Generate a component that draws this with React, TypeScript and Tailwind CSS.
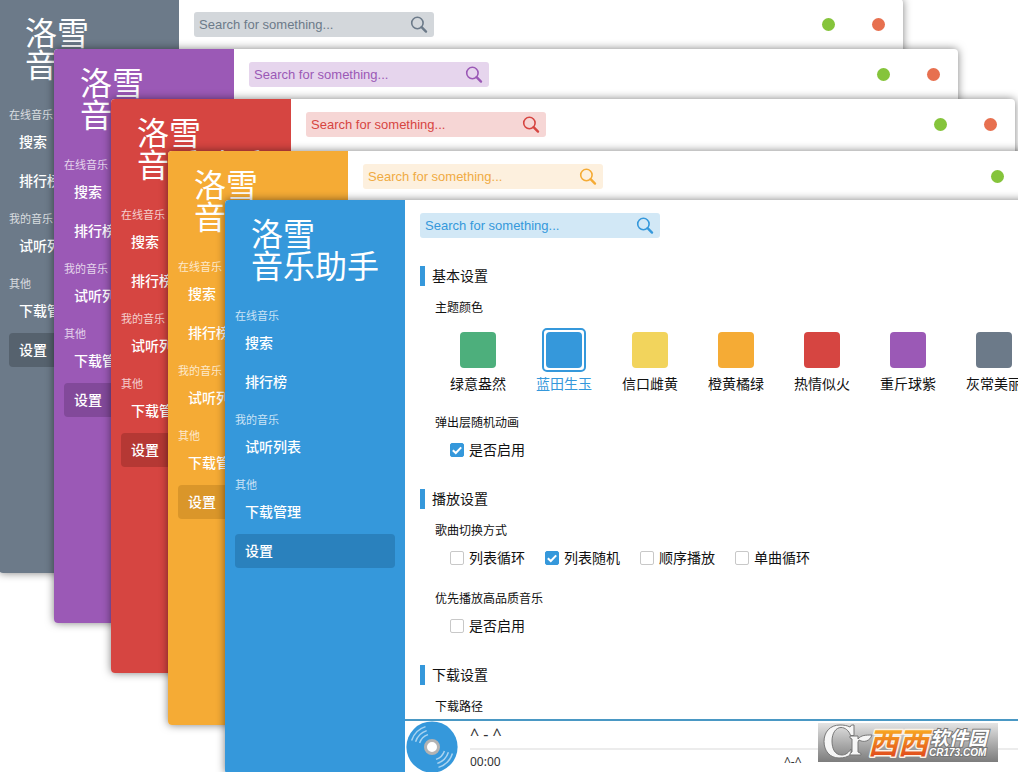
import React from "react";

type Theme = {
  id: string;
  place: string;
  side: string;
  active: string;
  field: string;
  text: string;
  placeholder: string;
};

const themes: Theme[] = [
  { id: "grey", place: "-left-px -top-px", side: "bg-[#6c7a89]", active: "bg-[#56626e]", field: "bg-[#d3d7db]", text: "text-[#6c7a89]", placeholder: "placeholder:text-[#6c7a89]" },
  { id: "purple", place: "left-[54px] top-[49px]", side: "bg-[#9b59b6]", active: "bg-[#82499a]", field: "bg-[#e6d5ed]", text: "text-[#9b59b6]", placeholder: "placeholder:text-[#9b59b6]" },
  { id: "red", place: "left-[111px] top-[99px]", side: "bg-[#d64541]", active: "bg-[#b53834]", field: "bg-[#f6d6d5]", text: "text-[#d64541]", placeholder: "placeholder:text-[#d64541]" },
  { id: "orange", place: "left-[168px] top-[151px]", side: "bg-[#f5ab35]", active: "bg-[#da962a]", field: "bg-[#fdf0de]", text: "text-[#f5ab35]", placeholder: "placeholder:text-[#f0ab43]" },
  { id: "blue", place: "left-[225px] top-[200px]", side: "bg-[#3598db]", active: "bg-[#2a81bd]", field: "bg-[#d2e8f6]", text: "text-[#3598db]", placeholder: "placeholder:text-[#3598db]" },
];

const groups = [
  { title: "在线音乐", items: ["搜索", "排行榜"] },
  { title: "我的音乐", items: ["试听列表"] },
  { title: "其他", items: ["下载管理", "设置"] },
];

const swatches = [
  { name: "绿意盎然", color: "bg-[#4daf7c]" },
  { name: "蓝田生玉", color: "bg-[#3598db]", selected: true },
  { name: "信口雌黄", color: "bg-[#f2d45c]" },
  { name: "橙黄橘绿", color: "bg-[#f5ab35]" },
  { name: "热情似火", color: "bg-[#d64541]" },
  { name: "重斤球紫", color: "bg-[#9b59b6]" },
  { name: "灰常美丽", color: "bg-[#6c7a89]" },
];

function Sidebar({ theme }: { theme: Theme }) {
  return (
    <aside className={`w-[180px] shrink-0 px-2.5 pt-[19px] text-white ${theme.side}`}>
      <h1 className="pl-4 text-[32px] leading-8">
        洛雪
        <br />
        音乐助手
      </h1>
      <nav className="mt-3">
        {groups.map((g) => (
          <div key={g.title} className="pt-[11px]">
            <h2 className="text-[11px] leading-5 text-white/75">{g.title}</h2>
            <ul className="flex flex-col gap-[5px]">
              {g.items.map((item) => (
                <li key={item}>
                  <a
                    href="#"
                    className={`block rounded px-2.5 text-sm leading-[34px] font-medium ${item === "设置" ? theme.active : ""}`}
                  >
                    {item}
                  </a>
                </li>
              ))}
            </ul>
          </div>
        ))}
      </nav>
    </aside>
  );
}

function TopBar({ theme }: { theme: Theme }) {
  return (
    <header className="flex h-[50px] shrink-0 items-center justify-between pr-[18px] pl-[15px]">
      <form className={`flex h-[25px] w-60 items-center rounded-[3px] px-[5px] pt-0.5 ${theme.field} ${theme.text}`}>
        <input
          type="text"
          aria-label="Search"
          placeholder="Search for something..."
          className={`min-w-0 flex-1 bg-transparent text-[13px] outline-none ${theme.placeholder}`}
        />
        <button type="button" aria-label="Search" className="px-px">
          <svg viewBox="0 0 18 18" className="size-[18px]" fill="none" stroke="currentColor">
            <circle cx="7.4" cy="7" r="5.7" strokeWidth="1.6" />
            <path d="M11.6 11.2 16 15.6" strokeWidth="2.4" strokeLinecap="round" />
          </svg>
        </button>
      </form>
      <div className="flex gap-[37px]">
        <button type="button" aria-label="Minimize" className="size-[13px] rounded-full bg-[#85c43b]" />
        <button type="button" aria-label="Close" className="size-[13px] rounded-full bg-[#e7704f]" />
      </div>
    </header>
  );
}

function Section({ title, children }: { title: string; children: React.ReactNode }) {
  return (
    <section className="flex flex-col">
      <h2 className="border-l-5 border-[#3598db] pl-[7px] text-sm leading-5">{title}</h2>
      {children}
    </section>
  );
}

function Check({ label, checked = false }: { label: string; checked?: boolean }) {
  return (
    <label className="flex items-center gap-[5px] text-sm leading-5">
      <span className="grid size-3.5 shrink-0">
        <input
          type="checkbox"
          defaultChecked={checked}
          className="peer col-start-1 row-start-1 size-3.5 appearance-none rounded-xs border border-[#c8c8c8] bg-white checked:border-[#3598db] checked:bg-[#3598db]"
        />
        <svg
          viewBox="0 0 14 14"
          className="pointer-events-none invisible col-start-1 row-start-1 size-3.5 peer-checked:visible"
          fill="none"
          stroke="white"
          strokeWidth="2"
        >
          <path d="M2.8 7.2 5.8 10 11.2 4.4" />
        </svg>
      </span>
      {label}
    </label>
  );
}

function Settings() {
  return (
    <main className="flex min-h-0 flex-1 flex-col gap-[29px] overflow-hidden pt-4 pl-[15px] whitespace-nowrap text-[#111]">
      <Section title="基本设置">
        <h3 className="mt-3 pl-[15px] text-xs leading-5">主题颜色</h3>
        <ul className="mt-2.5 flex gap-[30px] pl-[30px]">
          {swatches.map((s) => (
            <li key={s.name}>
              <button
                type="button"
                className={`flex w-14 flex-col items-center gap-0.5 text-sm leading-5 ${s.selected ? "text-[#3598db]" : ""}`}
              >
                <span className={`rounded-[5px] border-2 p-0.5 ${s.selected ? "border-[#3598db]" : "border-transparent"}`}>
                  <span className={`block size-9 rounded ${s.color}`} />
                </span>
                {s.name}
              </button>
            </li>
          ))}
        </ul>
        <h3 className="mt-[19px] pl-[15px] text-xs leading-5">弹出层随机动画</h3>
        <div className="mt-[7px] pl-[30px]">
          <Check label="是否启用" checked />
        </div>
      </Section>
      <Section title="播放设置">
        <h3 className="mt-3 pl-[15px] text-xs leading-5">歌曲切换方式</h3>
        <div className="mt-[7px] flex gap-5 pl-[30px]">
          <Check label="列表循环" />
          <Check label="列表随机" checked />
          <Check label="顺序播放" />
          <Check label="单曲循环" />
        </div>
        <h3 className="mt-[21px] pl-[15px] text-xs leading-5">优先播放高品质音乐</h3>
        <div className="mt-[7px] pl-[30px]">
          <Check label="是否启用" />
        </div>
      </Section>
      <Section title="下载设置">
        <h3 className="mt-3 pl-[15px] text-xs leading-5">下载路径</h3>
      </Section>
    </main>
  );
}

function Disc() {
  return (
    <svg viewBox="0 0 52 52" className="size-[52px] shrink-0" fill="none">
      <circle cx="26" cy="26" r="25.6" fill="#3598db" />
      <g stroke="#a9d3f0" strokeWidth="1.5">
        <path d="M5.6 19.5A21.4 21.4 0 0 1 19.5 5.6" />
        <path d="M9.6 20.7A17.2 17.2 0 0 1 20.7 9.6" />
        <path d="M13.6 22A13 13 0 0 1 22 13.6" />
        <path d="M46.4 32.5A21.4 21.4 0 0 1 32.5 46.4" />
        <path d="M42.4 31.3A17.2 17.2 0 0 1 31.3 42.4" />
        <path d="M38.4 30A13 13 0 0 1 30 38.4" />
      </g>
      <circle cx="26" cy="26" r="6.5" fill="white" stroke="#b3b3b3" strokeWidth="3" />
    </svg>
  );
}

function Player() {
  return (
    <footer className="flex h-[55px] shrink-0 border-t-2 border-[#4a98c4] pl-px">
      <Disc />
      <div className="flex min-w-0 flex-1 flex-col pr-2.5 pl-3 font-['Noto_Sans',sans-serif] text-[#333]">
        <div className="h-[27px] text-base leading-[27px]">^ - ^</div>
        <div className="h-0.5 bg-[#ececec]" />
        <div className="flex text-xs leading-6">
          <span className="w-[314px]">00:00</span>
          <span>^-^</span>
        </div>
      </div>
    </footer>
  );
}

function AppWindow({ theme, children }: { theme: Theme; children?: React.ReactNode }) {
  return (
    <div className={`absolute flex h-[574px] w-[904px] overflow-hidden rounded bg-white shadow-[0_0_8px_rgba(0,0,0,0.5)] ${theme.place}`}>
      <Sidebar theme={theme} />
      <div className="flex min-w-0 flex-1 flex-col">
        <TopBar theme={theme} />
        {children}
      </div>
    </div>
  );
}

function Watermark() {
  return (
    <div className="absolute top-[723px] left-[818px] h-[39px] w-[180px] bg-linear-to-b from-[#e4e4e4] to-[#7d7d7d]">
      <svg viewBox="0 0 180 39" className="h-full w-full">
        <defs>
          <linearGradient id="flame" x1="0" y1="7" x2="0" y2="32" gradientUnits="userSpaceOnUse">
            <stop offset="0" stopColor="#f8a821" />
            <stop offset="1" stopColor="#e2501c" />
          </linearGradient>
        </defs>
        <g id="mark" fill="#f6f6f6" stroke="#777" strokeWidth="1" strokeLinejoin="round">
          <path
            fillRule="evenodd"
            d="M22 2C12 2 6 9 6 18.500S12 35 21 35c5 0 9-1 12-4v-5c-2 3-5 6-9 6-7 0-10-6-10-14S18 4.500 23 4.500c4 0 8 3 9.500 8H36V2h-2.500l-1.500 2C29 2.500 26 2 22 2z"
          />
          <path d="M32 13h8v3c3-4 8-4 14-4-2 6-8 8-13 5l-1 2v10l3 1.500V32H32v-1.500l2-1.500V16l-2-1z" />
        </g>
        <g fontFamily="'Noto Sans CJK SC', sans-serif" fontWeight="700" fontStyle="italic">
          <g fontSize="30" fill="url(#flame)" stroke="#fbf3e6" strokeWidth="3" strokeLinejoin="round" paintOrder="stroke">
            <text x="50" y="31">西</text>
            <text x="80" y="31">西</text>
          </g>
          <text x="112" y="22" fontSize="19" fill="#fff" stroke="#777" strokeWidth="2" paintOrder="stroke">软件园</text>
        </g>
        <text x="111" y="33" fontSize="10" fontFamily="'Liberation Sans', sans-serif" fontWeight="700" fontStyle="italic" fill="#fff" stroke="#777" strokeWidth="2" paintOrder="stroke">
          CR173.COM
        </text>
      </svg>
    </div>
  );
}

export default function App() {
  return (
    <div className="relative h-screen min-h-[772px] overflow-hidden bg-white font-['Liberation_Sans','Noto_Sans_CJK_SC',sans-serif]">
      {themes.map((t) => (
        <AppWindow key={t.id} theme={t}>
          {t.id === "blue" && (
            <>
              <Settings />
              <Player />
            </>
          )}
        </AppWindow>
      ))}
      <Watermark />
    </div>
  );
}
